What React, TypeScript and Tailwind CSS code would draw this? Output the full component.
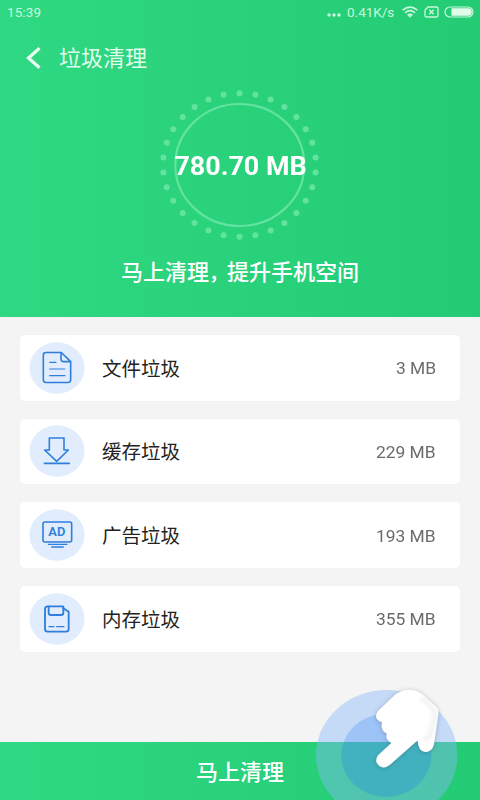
import type { ReactNode } from 'react'

interface JunkItem {
  label: string
  size: string
  icon: ReactNode
}

function FileIcon() {
  return (
    <>
      <path d="M70 32.500H24q-8 0-8 8v74q0 8 8 8h66q8 0 8-8V60Z" />
      <path d="M69 33v19q0 8 8 8h20" />
      <path d="M35 62h19M35 82h45M35 102h46" strokeWidth="3.500" />
    </>
  )
}

function DownloadIcon() {
  return (
    <>
      <path d="M34 40h44v36h13L56 110 20 76h14Z" />
      <path d="M19 116h75" />
    </>
  )
}

function AdIcon() {
  return (
    <>
      <rect x="15" y="40" width="86" height="60" rx="6" />
      <path d="M31 107h56M41 115h35" strokeWidth="3.800" />
      <text
        x="56.500"
        y="83"
        textAnchor="middle"
        textLength="51"
        lengthAdjust="spacingAndGlyphs"
        fill="#2f7edb"
        stroke="none"
        fontSize="41"
        fontWeight="600"
        fontFamily="Roboto, sans-serif"
      >
        AD
      </text>
    </>
  )
}

function DiskIcon() {
  return (
    <>
      <path d="M74 41H29q-8 0-8 8v60q0 8 8 8h55q8 0 8-8V57L75 46" strokeWidth="5.500" />
      <path d="M32 42v18q0 7 7 7h30q7 0 7-7V42" strokeWidth="5.500" />
      <path d="M33 102h15M56 102h22" strokeWidth="3.500" />
    </>
  )
}

const items: JunkItem[] = [
  { label: '文件垃圾', size: '3 MB', icon: <FileIcon /> },
  { label: '缓存垃圾', size: '229 MB', icon: <DownloadIcon /> },
  { label: '广告垃圾', size: '193 MB', icon: <AdIcon /> },
  { label: '内存垃圾', size: '355 MB', icon: <DiskIcon /> },
]

const dots = Array.from({ length: 30 }, (_, i) => {
  const a = (i * 12 * Math.PI) / 180
  return { x: 79.5 + 76.5 * Math.sin(a), y: 75 - 71.7 * Math.cos(a) }
})

function StatusBar() {
  return (
    <div className="flex h-6 items-center justify-between pl-[7px] pr-[6px] text-[#c8f8dc]">
      <span className="text-[13.500px] leading-6 tracking-[0.1px]">15:39</span>
      <div className="flex items-center">
        <svg className="mt-[5px] h-1 w-[14px]" viewBox="0 0 14 4" fill="currentColor">
          <circle cx="2" cy="2" r="1.700" />
          <circle cx="7" cy="2" r="1.700" />
          <circle cx="12" cy="2" r="1.700" />
        </svg>
        <span className="ml-[6px] w-[48px] whitespace-nowrap text-[13.500px] leading-6">0.41K/s</span>
        <svg className="ml-[7px] h-[12px] w-[16px]" viewBox="0 0 16 12" fill="none" stroke="currentColor">
          <path d="M.6 4.200Q8-2 15.400 4.200M3 6.900q5-4.400 10 0" strokeWidth="1.700" />
          <path d="M5 8.800q3-2.600 6 0L8 11.800Z" fill="currentColor" stroke="none" />
        </svg>
        <svg className="ml-[6px] h-[12px] w-[15px]" viewBox="0 0 15 12" fill="none" stroke="currentColor" strokeWidth="1.300">
          <path d="M4 1h8.500q1.500 0 1.500 1.500v7q0 1.500-1.500 1.500h-10Q1 11 1 9.500V4Z" />
          <path d="m5.300 3.800 4.400 4.400m0-4.400-4.400 4.400" strokeWidth="1.500" />
        </svg>
        <svg className="ml-[5px] h-[12px] w-[30px]" viewBox="0 0 30 12">
          <rect x="1" y="1" width="28" height="10" rx="5" fill="none" stroke="currentColor" strokeWidth="1.200" />
          <path d="M7.500 2.200h16.500a3.800 3.800 0 0 1 0 7.600H7.500Z" fill="#e2fcec" />
        </svg>
      </div>
    </div>
  )
}

function TapHint() {
  return (
    <svg className="pointer-events-none absolute bottom-0 right-0 h-[130px] w-[180px]" viewBox="0 0 540 390">
      <defs>
        <filter id="handShadow" x="-20%" y="-20%" width="140%" height="140%">
          <feDropShadow dx="0" dy="2" stdDeviation="7" floodColor="#405060" floodOpacity="0.400" />
        </filter>
        <filter id="soft" x="-20%" y="-20%" width="140%" height="140%">
          <feGaussianBlur stdDeviation="7" />
        </filter>
      </defs>
      <ellipse cx="260" cy="256" rx="212" ry="196" fill="#86b8f8" fillOpacity="0.440" />
      <ellipse cx="259" cy="256" rx="135" ry="125" fill="#0a69ff" fillOpacity="0.200" />
      <path
        filter="url(#handShadow)"
        fill="#fff"
        d="M235 122 287 73Q305 59 329 59 350 60 367 73L405 107Q418 119 415 134L402 222Q396 246 376 246 354 244 353 211L270 284Q252 298 238 288 221 275 234 256L274 219Q256 212 260 190 240 183 246 157 224 150 229 133Q231 126 235 122Z"
      />
      <path
        d="M364 84 396 114Q407 124 404 140L391 198Q384 210 370 206"
        fill="none"
        stroke="#aaa"
        strokeOpacity="0.300"
        strokeWidth="7"
        filter="url(#soft)"
      />
    </svg>
  )
}

export default function App() {
  return (
    <div className="relative flex h-[800px] w-[480px] flex-col overflow-hidden bg-[#f4f4f4] font-[Roboto,'Noto_Sans_CJK_SC',sans-serif]">
      <header className="h-[317px] shrink-0 bg-linear-to-r from-[#2fd882] to-[#23cb74] text-white">
        <StatusBar />
        <div className="flex h-[68px] items-center pl-[26px]">
          <svg className="h-[24px] w-[16px]" viewBox="0 0 16 24" fill="none" stroke="#e9fff2" strokeWidth="3.200">
            <path d="M13.500 2.200 2.500 12l11 9.800" />
          </svg>
          <h1 className="ml-[17px] mt-[2px] text-[22px] leading-8 text-[#e2fdec]">垃圾清理</h1>
        </div>

        <div className="relative mx-auto mt-[-2px] flex h-[150px] w-[160px] items-center justify-center">
          <svg className="absolute inset-0 h-full w-full" viewBox="0 0 160 150">
            <ellipse cx="79.800" cy="75" rx="64.500" ry="61" fill="none" stroke="#63e3a0" strokeWidth="2.200" />
            {dots.map((d, i) => (
              <circle key={i} cx={d.x} cy={d.y} r="3" fill="#63e3a0" />
            ))}
          </svg>
          <span className="relative mt-[3px] ml-[1px] scale-x-[1.075] whitespace-nowrap text-[25px] font-bold leading-8">
            780.70 MB
          </span>
        </div>
        <p className="mt-[17px] text-center text-[22px] font-medium leading-8">
          马上清理<span className="text-[18px] font-bold">，</span>提升手机空间
        </p>
      </header>

      <main className="flex flex-col gap-[18.200px] px-5 pt-[18px]">
        {items.map((item) => (
          <div key={item.label} className="flex h-[65.500px] items-center rounded-[5px] bg-white pl-[9px] pr-[24px]">
            <svg
              className="h-[52px] w-[56px]"
              viewBox="-27 1 168 156"
              fill="none"
              stroke="#2f7edb"
              strokeWidth="4.800"
              strokeLinecap="round"
              strokeLinejoin="round"
            >
              <ellipse cx="57" cy="79" rx="82.500" ry="77.500" fill="#e1edfc" stroke="none" />
              {item.icon}
            </svg>
            <span className="ml-[17px] mt-[4px] text-[19.500px] leading-8 text-[#222]">{item.label}</span>
            <span className="ml-auto mt-[3px] origin-right scale-x-[1.055] text-[16.500px] leading-8 text-[#6b6b6b]">
              {item.size}
            </span>
          </div>
        ))}
      </main>

      <button className="mt-auto h-[58px] shrink-0 bg-linear-to-r from-[#2fd882] to-[#23cb74] pt-[2px] text-[22px] font-medium text-white">
        马上清理
      </button>
      <TapHint />
    </div>
  )
}
